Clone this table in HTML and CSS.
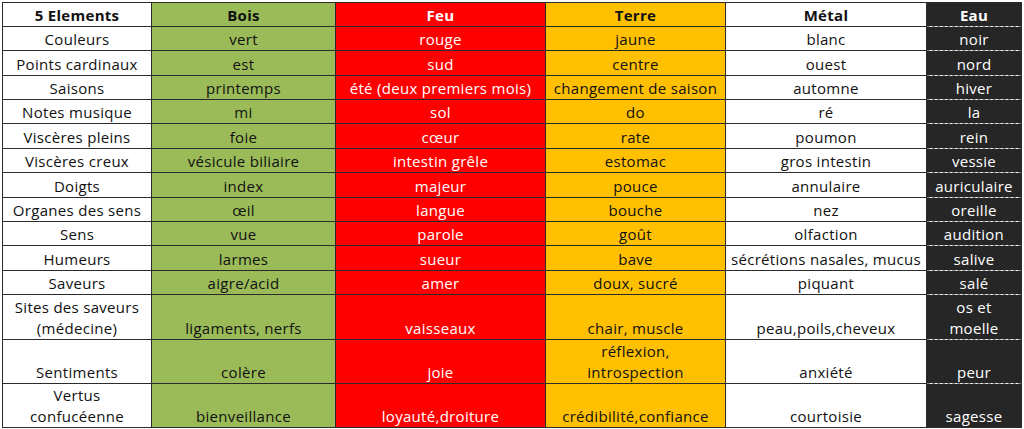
FILE: index.html
```html
<!DOCTYPE html>
<html lang="fr">
<head>
<meta charset="utf-8">
<title>5 Elements</title>
<link rel="stylesheet" href="styles.css">
</head>
<body>
<table class="grid">
  <colgroup>
    <col class="c-label"><col class="c-bois"><col class="c-feu"><col class="c-terre"><col class="c-metal"><col class="c-eau">
  </colgroup>
  <tr class="r24 head">
    <td class="lab">5 Elements</td><td class="bois">Bois</td><td class="feu">Feu</td><td class="terre">Terre</td><td class="metal">Métal</td><td class="eau">Eau</td>
  </tr>
  <tr class="r24">
    <td class="lab">Couleurs</td><td class="bois">vert</td><td class="feu">rouge</td><td class="terre">jaune</td><td class="metal">blanc</td><td class="eau">noir</td>
  </tr>
  <tr class="r25">
    <td class="lab">Points cardinaux</td><td class="bois">est</td><td class="feu">sud</td><td class="terre">centre</td><td class="metal">ouest</td><td class="eau">nord</td>
  </tr>
  <tr class="r24">
    <td class="lab">Saisons</td><td class="bois">printemps</td><td class="feu">été (deux premiers mois)</td><td class="terre">changement de saison</td><td class="metal">automne</td><td class="eau">hiver</td>
  </tr>
  <tr class="r24">
    <td class="lab">Notes musique</td><td class="bois">mi</td><td class="feu">sol</td><td class="terre">do</td><td class="metal">ré</td><td class="eau">la</td>
  </tr>
  <tr class="r25">
    <td class="lab">Viscères pleins</td><td class="bois">foie</td><td class="feu">cœur</td><td class="terre">rate</td><td class="metal">poumon</td><td class="eau">rein</td>
  </tr>
  <tr class="r24">
    <td class="lab">Viscères creux</td><td class="bois">vésicule biliaire</td><td class="feu">intestin grêle</td><td class="terre">estomac</td><td class="metal">gros intestin</td><td class="eau">vessie</td>
  </tr>
  <tr class="r25">
    <td class="lab">Doigts</td><td class="bois">index</td><td class="feu">majeur</td><td class="terre">pouce</td><td class="metal">annulaire</td><td class="eau">auriculaire</td>
  </tr>
  <tr class="r24">
    <td class="lab">Organes des sens</td><td class="bois">œil</td><td class="feu">langue</td><td class="terre">bouche</td><td class="metal">nez</td><td class="eau">oreille</td>
  </tr>
  <tr class="r24">
    <td class="lab">Sens</td><td class="bois">vue</td><td class="feu">parole</td><td class="terre">goût</td><td class="metal">olfaction</td><td class="eau">audition</td>
  </tr>
  <tr class="r25">
    <td class="lab">Humeurs</td><td class="bois">larmes</td><td class="feu">sueur</td><td class="terre">bave</td><td class="metal">sécrétions nasales, mucus</td><td class="eau">salive</td>
  </tr>
  <tr class="r24">
    <td class="lab">Saveurs</td><td class="bois">aigre/acid</td><td class="feu">amer</td><td class="terre">doux, sucré</td><td class="metal">piquant</td><td class="eau">salé</td>
  </tr>
  <tr class="r45">
    <td class="lab">Sites des saveurs<br>(médecine)</td><td class="bois">ligaments, nerfs</td><td class="feu">vaisseaux</td><td class="terre">chair, muscle</td><td class="metal">peau,poils,cheveux</td><td class="eau">os et<br>moelle</td>
  </tr>
  <tr class="r44">
    <td class="lab">Sentiments</td><td class="bois">colère</td><td class="feu">joie</td><td class="terre">réflexion,<br>introspection</td><td class="metal">anxiété</td><td class="eau">peur</td>
  </tr>
  <tr class="r44 last">
    <td class="lab">Vertus<br>confucéenne</td><td class="bois">bienveillance</td><td class="feu">loyauté,droiture</td><td class="terre">crédibilité,confiance</td><td class="metal">courtoisie</td><td class="eau">sagesse</td>
  </tr>
</table>
</body>
</html>
```
FILE: styles.css
```css
html, body {
  margin: 0;
  padding: 0;
  background: #ffffff;
}
body {
  padding: 2px 0 0 2px;
}
.grid {
  border-collapse: collapse;
  table-layout: fixed;
  width: 1019px;
  font-family: "Open Sans", "Liberation Sans", sans-serif;
  font-size: 15px;
  letter-spacing: 0.3px;
  color: #111;
}
.c-label { width: 149px; }
.c-bois { width: 184px; }
.c-feu { width: 210px; }
.c-terre { width: 180px; }
.c-metal { width: 201px; }
.c-eau { width: 95px; }

.grid td {
  border: 1px solid #2b2b2b;
  text-align: center;
  vertical-align: bottom;
  padding: 0 1px;
  line-height: 21px;
  overflow: hidden;
  white-space: nowrap;
}
.r24 td { height: 23px; }
.r25 td { height: 24px; }
.r45 td { height: 44px; }
.r44 td { height: 43px; }

.head td { font-weight: bold; }

.lab { background: #ffffff; }
.bois { background: #9bbb59; }
.feu { background: #ff0000; color: #ffffff; }
.terre { background: #ffc000; }
.metal { background: #ffffff; }
.grid td.eau {
  background: #262626;
  color: #ffffff;
  border-top: 1px dashed #8a8a8a;
  border-bottom: 1px dashed #8a8a8a;
}
.grid .head td.eau { border-top: 1px solid #2b2b2b; }
.grid .last td.eau { border-bottom: 1px solid #2b2b2b; }
```
